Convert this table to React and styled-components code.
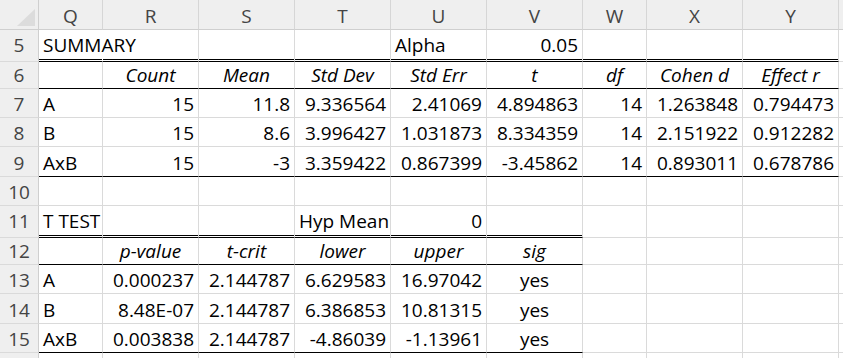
import React from "react";
import styled, { createGlobalStyle } from "styled-components";

const Global = createGlobalStyle`
  html, body { margin: 0; padding: 0; background: #fff; overflow: hidden; }
  body { font-family: "Open Sans", "Liberation Sans", sans-serif; }
`;

const COLS = "39px 64px 96px 96px 96px 96px 96px 64px 96px 96px 96px";

const Sheet = styled.div`
  display: flex;
  flex-direction: column;
  width: 843px;
  height: 358px;
  overflow: hidden;
`;

const Row = styled.div`
  display: grid;
  grid-template-columns: ${COLS};
  height: ${(p) => p.$h}px;
  flex: none;
`;

const Corner = styled.div`
  position: relative;
  background: #efefef;
  border-right: 1px solid #cfcfcf;
  border-bottom: 1px solid #cfcfcf;
  box-sizing: border-box;
`;

const CornerMark = styled.svg`
  position: absolute;
  left: 0;
  top: 0;
`;

const ColHead = styled.div`
  background: #efefef;
  border-right: 1px solid #d6d6d6;
  border-bottom: 1px solid #cfcfcf;
  box-sizing: border-box;
  color: #444;
  font-size: 19px;
  display: flex;
  align-items: flex-end;
  justify-content: center;
  padding-bottom: 3px;
  line-height: 20px;
`;

const RowHead = styled.div`
  background: #efefef;
  border-right: 1px solid #cfcfcf;
  border-bottom: 1px solid #dadada;
  box-sizing: border-box;
  color: #444;
  font-size: 19px;
  display: flex;
  align-items: flex-end;
  justify-content: center;
  padding-bottom: ${(p) => p.$pb}px;
  line-height: 20px;
`;

const Cell = styled.div`
  box-sizing: border-box;
  border-right: 1px solid ${(p) => (p.$noRight ? "transparent" : "#dadada")};
  border-bottom: 1px solid ${(p) => (p.$border ? "#000" : "#dadada")};
  box-shadow: ${(p) =>
    p.$border === "double" ? "inset 0 -1px 0 #fff, inset 0 -2px 0 #000" : "none"};
  display: flex;
  align-items: flex-end;
  justify-content: ${(p) =>
    p.$align === "right" ? "flex-end" : p.$align === "center" ? "center" : "flex-start"};
  padding: 0 4px ${(p) => p.$pb}px 4px;
  font-size: 19px;
  line-height: 20px;
  font-style: ${(p) => (p.$italic ? "italic" : "normal")};
  color: #000;
  white-space: nowrap;
  overflow: visible;
  min-width: 0;
`;

const LETTERS = ["Q", "R", "S", "T", "U", "V", "W", "X", "Y", "Z"];

const L = (v) => ({ v, a: "left" });
const R = (v) => ({ v, a: "right" });
const I = (v) => ({ v, a: "center", i: true });
const C = (v) => ({ v, a: "center" });
const E = { v: "" };

const rows = [
  { n: "5", h: 32, pb: 6, b: "double", bn: 9, noRight: [0], cells: [L("SUMMARY"), E, E, E, L("Alpha"), R("0.05"), E, E, E] },
  { n: "6", h: 27, pb: 3, b: "single", bn: 9, cells: [E, I("Count"), I("Mean"), I("Std Dev"), I("Std Err"), I("t"), I("df"), I("Cohen d"), I("Effect r")] },
  { n: "7", h: 29, pb: 3, cells: [L("A"), R("15"), R("11.8"), R("9.336564"), R("2.41069"), R("4.894863"), R("14"), R("1.263848"), R("0.794473")] },
  { n: "8", h: 29, pb: 3, cells: [L("B"), R("15"), R("8.6"), R("3.996427"), R("1.031873"), R("8.334359"), R("14"), R("2.151922"), R("0.912282")] },
  { n: "9", h: 30, pb: 3, b: "single", bn: 9, cells: [L("AxB"), R("15"), R("-3"), R("3.359422"), R("0.867399"), R("-3.45862"), R("14"), R("0.893011"), R("0.678786")] },
  { n: "10", h: 29, pb: 3, cells: [] },
  { n: "11", h: 32, pb: 6, b: "double", bn: 6, cells: [L("T TEST"), E, E, L("Hyp Mean"), R("0"), E] },
  { n: "12", h: 27, pb: 3, b: "single", bn: 6, cells: [E, I("p-value"), I("t-crit"), I("lower"), I("upper"), I("sig")] },
  { n: "13", h: 29, pb: 3, cells: [L("A"), R("0.000237"), R("2.144787"), R("6.629583"), R("16.97042"), C("yes")] },
  { n: "14", h: 30, pb: 3, cells: [L("B"), R("8.48E-07"), R("2.144787"), R("6.386853"), R("10.81315"), C("yes")] },
  { n: "15", h: 29, pb: 3, b: "single", bn: 6, cells: [L("AxB"), R("0.003838"), R("2.144787"), R("-4.86039"), R("-1.13961"), C("yes")] },
  { n: "", h: 29, pb: 3, cells: [] },
];

export default function App() {
  return (
    <>
      <Global />
      <Sheet>
        <Row $h={30}>
          <Corner>
            <CornerMark width="39" height="30" viewBox="0 0 39 30">
              <polygon points="35,9 35,26 17,26" fill="#dcdcdc" />
            </CornerMark>
          </Corner>
          {LETTERS.map((l, i) => (
            <ColHead key={l}>{i < 9 ? l : ""}</ColHead>
          ))}
        </Row>
        {rows.map((r, ri) => (
          <Row key={ri} $h={r.h}>
            <RowHead $pb={r.pb}>{r.n}</RowHead>
            {LETTERS.map((l, ci) => {
              const c = r.cells[ci] || E;
              const border = r.b && ci < r.bn ? r.b : null;
              return (
                <Cell
                  key={l}
                  $align={c.a}
                  $italic={c.i}
                  $border={border}
                  $pb={r.pb}
                  $noRight={r.noRight && r.noRight.includes(ci)}
                >
                  {c.v}
                </Cell>
              );
            })}
          </Row>
        ))}
      </Sheet>
    </>
  );
}
